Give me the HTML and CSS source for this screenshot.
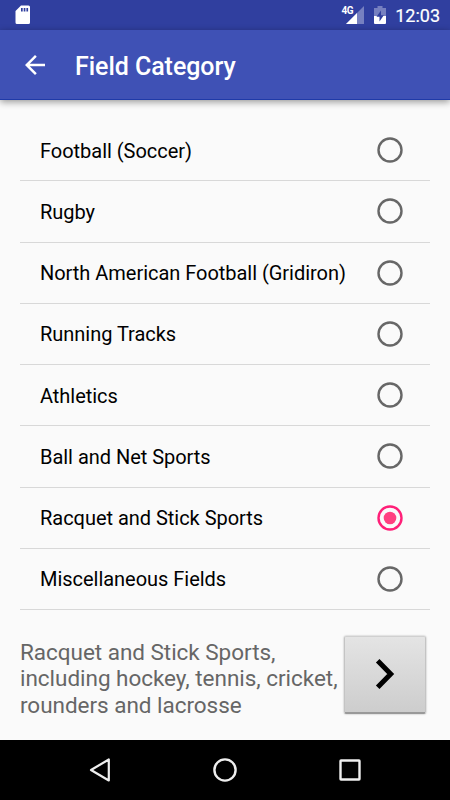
FILE: index.html
```html
<!DOCTYPE html>
<html lang="en">
<head>
    <meta charset="UTF-8">
    <meta name="viewport" content="width=device-width, initial-scale=1.0">
    <title>Field Category</title>
    <link rel="stylesheet" href="styles.css">
</head>
<body>
    <svg class="symbols" width="0" height="0">
        <symbol id="radio-off" viewBox="0 0 26 26">
            <circle cx="13" cy="13" r="11.500" fill="none" stroke="#676767" stroke-width="2.400"/>
        </symbol>
        <symbol id="radio-on" viewBox="0 0 26 26">
            <circle cx="13" cy="13" r="11.500" fill="none" stroke="#ff1f78" stroke-width="2.400"/>
            <circle cx="13" cy="13" r="6.300" fill="#ff4081"/>
        </symbol>
    </svg>

    <div class="screen">
        <div class="status-bar">
            <svg class="sd-icon" width="16" height="20" viewBox="0 0 16 20">
                <path fill="#fff" fill-rule="evenodd" d="M6 0.5h7.5a1.5 1.5 0 0 1 1.5 1.5v15.500a1.500 1.500 0 0 1-1.500 1.500H2a1.500 1.500 0 0 1-1.500-1.500V6zM6 3v3.500h1.700V3zM8.700 3v3.500h1.700V3zM11.400 3v3.500h1.700V3z"/>
            </svg>
            <div class="status-right">
                <span class="network">4G</span>
                <svg class="signal-icon" width="18" height="18" viewBox="0 0 18 18">
                    <path fill="#7680c0" d="M18 0v18H0z"/>
                    <path fill="#fff" d="M11 7v11H0z"/>
                </svg>
                <svg class="battery-icon" width="12" height="18" viewBox="0 0 12 18">
                    <path fill="#7680c0" d="M3.500 0h5v2H12v8H0V2h3.500z"/>
                    <path fill="#fff" d="M0 10h12v7a1 1 0 0 1-1 1H1a1 1 0 0 1-1-1z"/>
                    <path fill="#303f9f" d="M7 4.500L2.500 10.700h3V15.500L9.800 9.300H7z"/>
                </svg>
                <span class="time">12:03</span>
            </div>
        </div>

        <div class="toolbar">
            <svg class="back-icon" width="30" height="30" viewBox="0 0 24 24">
                <path fill="#fff" d="M20 11H7.830l5.590-5.590L12 4l-8 8 8 8 1.410-1.410L7.830 13H20v-2z"/>
            </svg>
            <h1 class="title">Field Category</h1>
        </div>

        <div class="content">
            <ul class="list">
                <li class="item"><span>Football (Soccer)</span><svg class="radio"><use href="#radio-off"/></svg></li>
                <li class="item"><span>Rugby</span><svg class="radio"><use href="#radio-off"/></svg></li>
                <li class="item"><span>North American Football (Gridiron)</span><svg class="radio"><use href="#radio-off"/></svg></li>
                <li class="item"><span>Running Tracks</span><svg class="radio"><use href="#radio-off"/></svg></li>
                <li class="item"><span>Athletics</span><svg class="radio"><use href="#radio-off"/></svg></li>
                <li class="item"><span>Ball and Net Sports</span><svg class="radio"><use href="#radio-off"/></svg></li>
                <li class="item"><span>Racquet and Stick Sports</span><svg class="radio"><use href="#radio-on"/></svg></li>
                <li class="item"><span>Miscellaneous Fields</span><svg class="radio"><use href="#radio-off"/></svg></li>
            </ul>

            <div class="footer">
                <p class="description">Racquet and Stick Sports,<br>including hockey, tennis, cricket,<br>rounders and lacrosse</p>
                <button class="next" aria-label="Next">
                    <svg width="20" height="32" viewBox="0 0 20 32">
                        <path fill="none" stroke="#000" stroke-width="5" d="M2.700 2.700L15.700 16 2.700 29.300"/>
                    </svg>
                </button>
            </div>
        </div>

        <div class="nav-bar">
            <svg width="30" height="30" viewBox="0 0 30 30">
                <path fill="none" stroke="#eee" stroke-width="2.200" stroke-linejoin="round" d="M23.800 4.500v21L6 15z"/>
            </svg>
            <svg width="30" height="30" viewBox="0 0 30 30">
                <circle fill="none" stroke="#eee" stroke-width="2.400" cx="15" cy="15" r="10.600"/>
            </svg>
            <svg width="30" height="30" viewBox="0 0 30 30">
                <rect fill="none" stroke="#eee" stroke-width="2.400" x="5.500" y="5.500" width="19" height="19" rx="0.500"/>
            </svg>
        </div>
    </div>
</body>
</html>
```

FILE: styles.css
```css
* {
    margin: 0;
    padding: 0;
    box-sizing: border-box;
}

body {
    font-family: Roboto, 'Noto Sans', sans-serif;
    background-color: #fafafa;
    color: #000;
    overflow: hidden;
}

.symbols {
    display: none;
}

.screen {
    width: 450px;
    height: 800px;
    display: flex;
    flex-direction: column;
}

.status-bar {
    height: 30px;
    padding: 0 10px 0 15px;
    background: #303f9f;
    color: #fff;
    display: flex;
    align-items: center;
    justify-content: space-between;
}

.status-right {
    display: flex;
    align-items: center;
}

.network {
    font-size: 10px;
    font-weight: 700;
    line-height: 10px;
    letter-spacing: -0.5px;
    margin: 0 -7px 9px 0;
    z-index: 1;
}

.signal-icon {
    margin-right: 10px;
}

.battery-icon {
    margin-right: 9px;
}

.time {
    font-size: 18px;
    line-height: 30px;
    padding-top: 2px;
    -webkit-text-stroke: 0.2px #fff;
}

.toolbar {
    height: 70px;
    padding-left: 20px;
    background: #3f51b5;
    color: #fff;
    border-bottom: 1px solid #1f3aa8;
    box-shadow: 0 2px 7px rgba(0, 0, 0, 0.4);
    display: flex;
    align-items: center;
    gap: 25px;
}

.title {
    font-size: 25px;
    font-weight: 500;
    line-height: 30px;
    letter-spacing: -0.05px;
    padding-top: 4px;
}

.content {
    flex: 1;
    padding: 20px 20px 0;
}

.list {
    list-style: none;
}

.item {
    height: 61.25px;
    padding: 0 27px 0 20px;
    border-bottom: 1px solid #d8d8d8;
    font-size: 20px;
    letter-spacing: -0.03px;
    display: flex;
    align-items: center;
    justify-content: space-between;
}

.item span {
    padding-top: 1px;
}

.radio {
    width: 26px;
    height: 26px;
}

.footer {
    display: flex;
    justify-content: space-between;
    margin: 25px -15px 0 0;
}

.description {
    color: #666;
    font-size: 22.5px;
    line-height: 26.25px;
    letter-spacing: -0.03px;
    padding-top: 4px;
    white-space: nowrap;
}

.next {
    width: 82px;
    height: 78px;
    margin: 1px 19.5px 0 0;
    padding: 0 0 2px;
    border: 1px solid #c4c4c4;
    border-top-color: #d0d0d0;
    border-bottom: 2px solid #999;
    border-radius: 2px;
    background: linear-gradient(#e4e4e4, #cdcdcd);
    box-shadow: 0 0 2px rgba(0, 0, 0, 0.35);
    display: flex;
    align-items: center;
    justify-content: center;
}

.nav-bar {
    height: 60px;
    padding: 0 85px;
    background: #000;
    display: flex;
    align-items: center;
    justify-content: space-between;
}
```
